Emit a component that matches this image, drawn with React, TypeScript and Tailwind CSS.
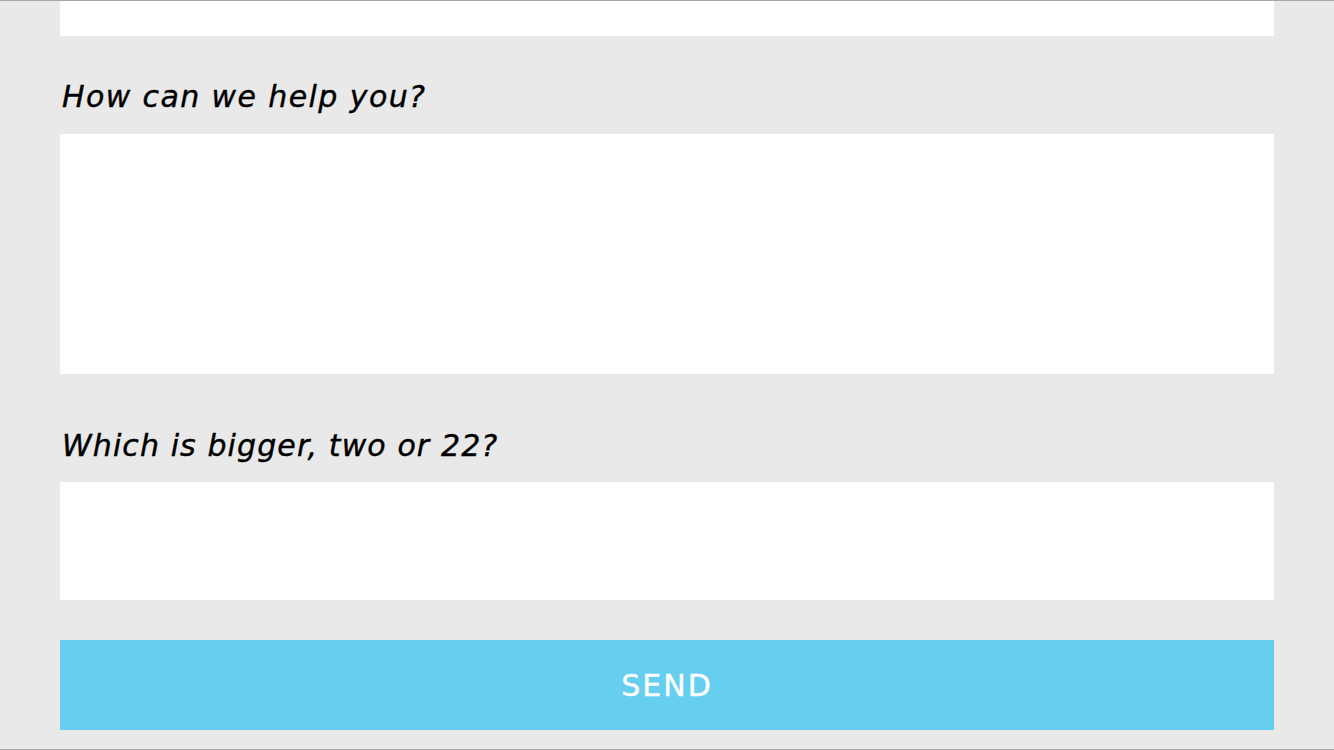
export default function App() {
  return (
    <div
      className="h-[750px] w-full overflow-hidden border-y border-[#a8a8a8] bg-[#e9e9e9] px-[60px]"
      style={{ fontFamily: '"DejaVu Sans", "Liberation Sans", sans-serif' }}
    >
      <div className="h-[35px] bg-white" />

      <label className="mt-[39px] mb-[15px] block pl-[2px] text-[30px] italic leading-[44px] tracking-[1.4px] text-black [-webkit-text-stroke:0.4px_black]">
        How can we help you?
      </label>
      <div className="h-[240px] bg-white" />

      <label className="mt-[50px] mb-[14px] block pl-[2px] text-[30px] italic leading-[44px] tracking-[1.1px] text-black [-webkit-text-stroke:0.4px_black]">
        Which is bigger, two or 22?
      </label>
      <div className="h-[118px] bg-white" />

      <button className="mt-[40px] flex h-[90px] w-full items-center justify-center bg-[#66ceef] text-[30px] tracking-[2px] text-white [-webkit-text-stroke:0.4px_white]">
        SEND
      </button>
    </div>
  );
}
